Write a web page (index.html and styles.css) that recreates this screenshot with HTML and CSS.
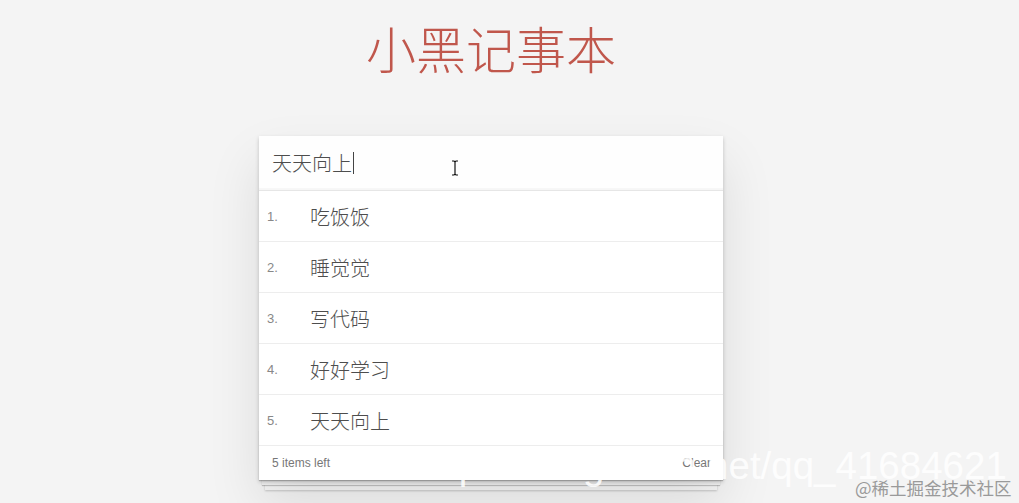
FILE: index.html
```html
<!DOCTYPE html>
<html>
	<head>
		<meta charset="utf-8">
		<title>小黑记事本</title>
		<link rel="stylesheet" href="styles.css">
	</head>
	<body>

		<section class="app">
			<h1 class="titulo">小黑记事本</h1>

			<div class="tarjeta">
				<header class="cabecera">
					<div class="entrada">天天向上<span class="cursor"></span></div>
				</header>

				<ul class="lista">
					<li><span class="indice">1.</span><span class="texto">吃饭饭</span></li>
					<li><span class="indice">2.</span><span class="texto">睡觉觉</span></li>
					<li><span class="indice">3.</span><span class="texto">写代码</span></li>
					<li><span class="indice">4.</span><span class="texto">好好学习</span></li>
					<li><span class="indice">5.</span><span class="texto">天天向上</span></li>
				</ul>

				<footer class="pie">
					<span>5 items left</span>
					<span class="limpiar">Clear</span>
				</footer>
			</div>
		</section>

		<!-- puntero del raton sobre el input -->
		<svg class="puntero" width="8" height="16" viewBox="0 0 8 16">
			<path d="M1 1h2l1 1 1-1h2M4 2v12M1 15h2l1-1 1 1h2" fill="none" stroke="#111" stroke-width="1.2"/>
		</svg>

		<div class="marca">https://blog.csdn.net/qq_41684621</div>
		<div class="marca2">@稀土掘金技术社区</div>

	</body>
</html>
```

FILE: styles.css
```css
* {
    margin: 0;
    padding: 0;
    box-sizing: border-box;
}

body {
    background-color: #f4f4f4;
    font-family: "Liberation Sans", "Noto Sans CJK SC", sans-serif;
    color: #555;
    height: 503px;
    overflow: hidden;
}

/* contenedor principal */
.app {
    width: 464px;
    margin-left: 259px;
    padding-top: 12px;
}

.titulo {
    font-family: "Noto Sans CJK SC", sans-serif;
    font-size: 50px;
    font-weight: 300;
    line-height: 70px;
    height: 70px;
    text-align: center;
    color: #c0574c;
}

.tarjeta {
    margin-top: 54px;
    background: #fff;
    box-shadow: 0 2px 4px rgba(0, 0, 0, 0.2), 0 25px 50px rgba(0, 0, 0, 0.1);
}

/* cabecera con el input */
.cabecera {
    height: 55px;
    border-bottom: 1px solid #e6e6e6;
    box-shadow: inset 0 -2px 1px rgba(0, 0, 0, 0.03);
    background: #fefefe;
}

.entrada {
    font-family: "Noto Sans CJK SC", sans-serif;
    font-size: 20px;
    font-weight: 300;
    line-height: 54px;
    padding-left: 13px;
    color: #4d4d4d;
    display: flex;
    align-items: center;
}

.cursor {
    display: inline-block;
    width: 1px;
    height: 22px;
    background: #444;
    margin-left: 1px;
}

/* lista */
.lista {
    list-style: none;
}

.lista li {
    height: 51px;
    display: flex;
    align-items: center;
    border-bottom: 1px solid #ededed;
}

.indice {
    width: 51px;
    padding-left: 8px;
    font-size: 13px;
    color: #888;
}

.texto {
    font-family: "Noto Sans CJK SC", sans-serif;
    font-size: 20px;
    font-weight: 300;
    color: #4d4d4d;
}

/* pie */
.pie {
    position: relative;
    height: 34px;
    display: flex;
    justify-content: space-between;
    align-items: center;
    padding: 0 12px 0 13px;
    font-size: 12px;
    color: #777;
}

.pie:before {
    content: '';
    position: absolute;
    right: 0;
    bottom: 0;
    left: 0;
    height: 50px;
    overflow: hidden;
    z-index: -1;
    box-shadow: 0 1px 1px rgba(0, 0, 0, 0.2),
                0 8px 0 -3px #f6f6f6,
                0 9px 1px -3px rgba(0, 0, 0, 0.2),
                0 16px 0 -6px #f6f6f6,
                0 17px 2px -6px rgba(0, 0, 0, 0.2);
}

.limpiar {
    color: #777;
}

/* superpuestos */
.puntero {
    position: absolute;
    left: 451px;
    top: 160px;
}

.marca {
    position: absolute;
    left: 416px;
    top: 444px;
    font-family: "Liberation Sans", sans-serif;
    font-size: 38.5px;
    color: rgba(255, 255, 255, 0.85);
    white-space: nowrap;
}

.marca2 {
    position: absolute;
    left: 855px;
    top: 475px;
    font-family: "Noto Sans CJK SC", serif;
    font-size: 17.5px;
    color: #9a9a9a;
    white-space: nowrap;
}
```
